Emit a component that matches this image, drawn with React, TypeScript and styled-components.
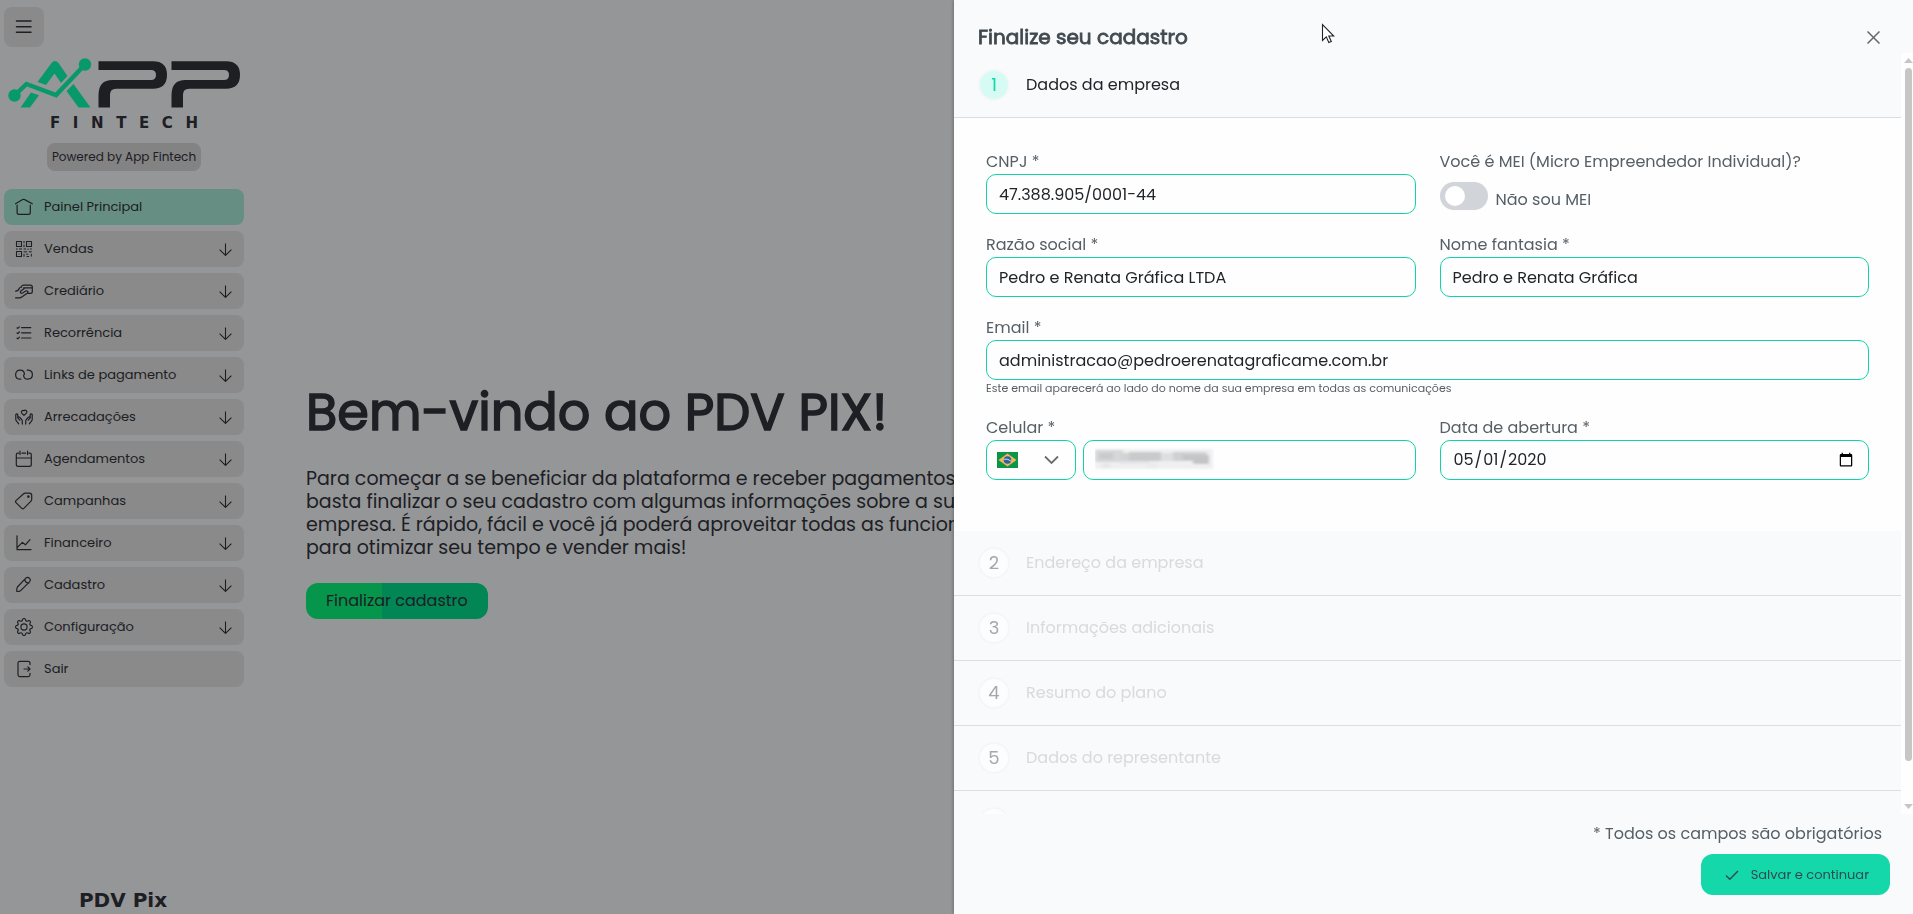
import React, { useState } from 'react';
import styled, { createGlobalStyle, css } from 'styled-components';
import { BsGear } from 'react-icons/bs';

const font = "Poppins, Inter, 'Noto Sans', sans-serif";
const accent = '#14d8aa';
const surface = '#f8fafc';

const GlobalStyle = createGlobalStyle`
  *, *::before, *::after { box-sizing: border-box; }
  body { margin: 0; background: ${surface}; color: #33343c; font-family: ${font}; font-size: 16px; line-height: 24px; overflow: hidden; }
  button, input, select { font: inherit; color: inherit; }
  h1, h2, p, ul { margin: 0; padding: 0; }
`;

/* ---------- page ---------- */

const Page = styled.div`
  display: flex;
  height: 100vh;
`;

const Sidebar = styled.aside`
  display: flex;
  flex-direction: column;
  flex: 0 0 248px;
  padding: 7px 4px 2px;
`;

const MenuButton = styled.button`
  display: grid;
  place-items: center;
  width: 40px;
  height: 40px;
  padding: 0;
  border: 0;
  border-radius: 8px;
  background: #e4e6e5;
`;

const LogoBox = styled.div`
  display: flex;
  flex-direction: column;
  align-items: center;
  margin-top: 11px;
`;

const LogoMark = styled.svg`
  display: block;
  width: 232px;
  height: 50px;
`;

const Wordmark = styled.div`
  display: flex;
  justify-content: space-between;
  width: 148px;
  margin-top: 7px;
  font-family: 'DejaVu Sans', sans-serif;
  font-size: 15px;
  font-weight: 700;
  line-height: 16px;
`;

const Powered = styled.div`
  align-self: center;
  margin-top: 12px;
  padding: 0 5px;
  border-radius: 8px;
  background: #dadada;
  font-size: 12px;
  line-height: 28px;
`;

const Menu = styled.ul`
  display: flex;
  flex-direction: column;
  gap: 6px;
  list-style: none;
`;

const Nav = styled.nav`
  margin-top: 18px;
`;

const MenuItem = styled.button<{ $active?: boolean }>`
  display: flex;
  align-items: center;
  gap: 11px;
  width: 100%;
  height: 36px;
  padding: 0 12px 0 11px;
  border: 0;
  border-radius: 8px;
  background: ${(p) => (p.$active ? '#aceddb' : '#e4e6e5')};
  font-size: 13px;
  text-align: left;

  span { flex: 1; }
`;

const Product = styled.footer`
  margin-top: auto;
  padding-right: 2px;
  font-family: 'DejaVu Sans', sans-serif;
  font-size: 20px;
  font-weight: 700;
  line-height: 24px;
  text-align: center;
`;

const Welcome = styled.main`
  display: flex;
  flex: 1;
  flex-direction: column;
  justify-content: center;
  align-items: flex-start;
  padding: 86px 0 0 58px;

  h1 {
    font-size: 51px;
    font-weight: 400;
    line-height: 62px;
    -webkit-text-stroke: 0.03em currentColor;
  }

  p {
    margin-top: 24px;
    font-size: 19px;
    line-height: 23px;
    white-space: nowrap;
  }
`;

const FinishButton = styled.button`
  height: 36px;
  margin-top: 24px;
  padding: 0 20px;
  border: 0;
  border-radius: 12px;
  background: linear-gradient(90deg, #09f97e 42%, #04df90 42%);
`;

/* ---------- drawer ---------- */

const Backdrop = styled.div`
  position: fixed;
  inset: 0;
  display: flex;
  justify-content: flex-end;
  background: rgba(0, 0, 0, 0.4);
`;

const Drawer = styled.section`
  display: flex;
  flex-direction: column;
  width: 50.13%;
  background: ${surface};
  box-shadow: 0 0 4px rgba(0, 0, 0, 0.4);
`;

const DrawerHeader = styled.header`
  display: flex;
  justify-content: space-between;
  align-items: flex-end;
  height: 53px;
  padding: 0 28px 4px 24px;

  h2 {
    color: #41494f;
    font-size: 20px;
    font-weight: 400;
    line-height: 24px;
    -webkit-text-stroke: 0.04em currentColor;
  }
`;

const CloseButton = styled.button`
  display: grid;
  place-items: center;
  width: 24px;
  height: 24px;
  padding: 0;
  border: 0;
  background: none;
  color: #666;
`;

const DrawerBody = styled.div`
  display: flex;
  flex: 1;
  min-height: 0;
`;

const Steps = styled.div`
  flex: 1;
  min-width: 0;
  overflow: hidden;
`;

const StepRow = styled.div<{ $active?: boolean }>`
  display: flex;
  align-items: center;
  gap: 16px;
  height: 65px;
  padding: 0 24px;
  border-bottom: 1px solid #dcdee1;
  color: ${(p) => (p.$active ? '#212529' : '#d8dadc')};
`;

const StepBadge = styled.span<{ $active?: boolean }>`
  display: grid;
  place-items: center;
  width: 32px;
  height: 32px;
  border: 2px solid #f4f6f8;
  border-radius: 50%;
  background: ${(p) => (p.$active ? '#d6fbf4' : '#fcfdfe')};
  color: ${(p) => (p.$active ? accent : '#a6a8aa')};
  font-size: 18px;
`;

const Form = styled.form`
  display: grid;
  grid-template-columns: 1fr 1fr;
  gap: 19px 24px;
  padding: 32px 32px 51px;
  background: #fefefe;
`;

const Field = styled.div<{ $wide?: boolean }>`
  display: flex;
  flex-direction: column;
  min-width: 0;
  color: #555f65;
  ${(p) => p.$wide && css`grid-column: 1 / -1;`}
`;

const Label = styled.label`
  font-size: 16px;
`;

const controlFrame = css`
  width: 100%;
  height: 40px;
  border: 1px solid #10d3a8;
  border-radius: 10px;
  background: transparent;
  outline: 0;
`;

const TextInput = styled.input`
  ${controlFrame}
  padding: 0 12px;
  color: #212529;
`;

const Hint = styled.small`
  font-size: 11px;
  line-height: 17px;
`;

const PhoneRow = styled.div`
  display: grid;
  grid-template-columns: 90px 1fr;
  gap: 7px;
`;

const Stack = styled.div`
  display: grid;
  align-items: center;

  > * { grid-area: 1 / 1; }
  > svg { pointer-events: none; }
`;

const CountrySelect = styled.select`
  ${controlFrame}
  appearance: none;
`;

const FlagRow = styled.div`
  display: flex;
  justify-content: space-between;
  align-items: center;
  padding: 0 16px 0 11px;
  pointer-events: none;
`;

const MaskedNumber = styled.svg`
  width: 120px;
  height: 24px;
  margin-left: 12px;
`;

const SwitchRow = styled.label`
  display: flex;
  gap: 8px;
  height: 40px;
  padding-top: 8px;
  line-height: 36px;
`;

const Switch = styled.input`
  appearance: none;
  width: 48px;
  height: 28px;
  margin: 0;
  padding: 4px 5px;
  border-radius: 14px;
  background: #d1d4d9;

  &::before {
    content: '';
    display: block;
    width: 20px;
    height: 20px;
    border-radius: 50%;
    background: #fff;
  }

  &:checked { background: ${accent}; }
  &:checked::before { margin-left: 18px; }
`;

const ScrollTrack = styled.div`
  display: flex;
  flex-direction: column;
  align-items: center;
  width: 12px;
  padding: 5px 0 5px 2px;
  background: #fefefe;
`;

const ScrollThumb = styled.div`
  flex: 1;
  width: 7px;
  margin: 5px 0 43px;
  border-radius: 4px;
  background: #c6c6c6;
`;

const DrawerFooter = styled.footer`
  display: flex;
  flex-direction: column;
  align-items: flex-end;
  gap: 8px;
  height: 100px;
  padding: 8px 23px 0;

  p { padding-right: 8px; color: #555f65; }
`;

const SaveButton = styled.button`
  display: flex;
  align-items: center;
  gap: 12px;
  height: 41px;
  padding: 0 21px 0 24px;
  border: 0;
  border-radius: 12px;
  background: ${accent};
  color: #2f4a50;
  font-size: 13px;
`;

const Pointer = styled.svg`
  position: fixed;
  top: 23px;
  left: 1321px;
  pointer-events: none;
`;

/* ---------- icons ---------- */

const Glyph = ({ children }: { children: React.ReactNode }) => (
  <svg width="18" height="18" viewBox="0 0 18 18" fill="none" stroke="currentColor" strokeWidth="1.2" strokeLinecap="round" strokeLinejoin="round" aria-hidden="true">
    {children}
  </svg>
);

const icons = {
  home: <Glyph><path d="M.5 5.800 7.700 1.600q1-.6 2 0l7.600 4.200M2.100 7.200v7.300q0 1.900 1.900 1.900h9.400q1.900 0 1.900-1.900V7.200" /></Glyph>,
  qr: (
    <Glyph>
      <path d="M1.500 1.500h5v5h-5zM11.500 1.500h5v5h-5zM1.500 11.500h5v5h-5z" strokeWidth="1.100" />
      <path d="M4 4h.1M14 4h.1M4 14h.1M9 1.400v1.200M9 5v1.800M1.400 9h.8M4.400 9h2.200M9 9h1.600M13 9v.6M15.400 9h1M9 11.800h2.600M14.200 11.800h2.200M9 14.200v2.200M11.600 14.200h1.200M12 16.500h1.600M16.300 14.200v2" strokeWidth="1" />
    </Glyph>
  ),
  card: (
    <Glyph>
      <path d="M6.400 5.200q.2-2 2-2h7q1.900 0 1.900 1.900v4.400q0 1.900-1.900 1.900h-2.600M8.600 5.800h8.600" />
      <path d="M.6 9.200q3-.4 3.800-3Q4.800 5 6 5M.6 15.800h3.700q1.400 0 2.500-.8l5.400-3.800q1.200-1 .4-2-.7-.8-1.900-.1L7.600 11q-1.600.8-2.200-.4-.4-1 .8-1.800l3-2.200" />
    </Glyph>
  ),
  list: <Glyph><path d="M6.600 3.600h9.200M6.600 8.800h9.200M6.600 14h9.200M2 3.800l.8.6L4.400 2.800M2 9l.8.6L4.400 8M2 14.200l.8.6 1.600-1.600" /></Glyph>,
  link: <Glyph><path d="M5.800 13.200Q.6 13.400.6 8.800q0-4.600 4.600-4.600 4.200 0 4.200 4.200M12.200 4.200q5.200-.2 5.200 4.400 0 4.600-4.600 4.600-4.200 0-4.200-4.200" /></Glyph>,
  hands: (
    <Glyph>
      <path d="M9 7.400 6.700 5.100a1.700 1.700 0 0 1 2.300-2.400 1.700 1.700 0 0 1 2.400 2.400z" />
      <path d="M.8 6.400v5.100q0 .8.6 1.400l2.300 2.900M.8 6.400q1.200-1.200 2 .2v3.200l2 2.400M2.800 9.200q1-.9 2 .2l1.600 1.800q.9 1 .9 2.200v2.700M17.200 6.400v5.100q0 .8-.6 1.400l-2.300 2.900M17.200 6.400q-1.200-1.200-2 .2v3.200l-2 2.400M15.200 9.200q-1-.9-2 .2l-1.600 1.800q-.9 1-.9 2.200v2.700" />
    </Glyph>
  ),
  calendar: <Glyph><path d="M3.600 3.200H2.900q-1.600 0-1.600 1.600v9.700q0 1.900 1.900 1.900h11.200q1.900 0 1.900-1.900V4.800q0-1.600-1.600-1.600H14M7 3.200h3.600M5 1.200v3.400M12.600 1.200v3.400M1.400 8h15" /></Glyph>,
  tag: <Glyph><path d="M10.300 1.200h4.200q2.200 0 2.200 2.200v4.200q0 .9-.7 1.600l-7.200 7.200q-1 1-2 0L1 10.600q-1-1 0-2l7.300-6.600q.8-.8 2-.8z" /><circle cx="13.400" cy="4.600" r=".7" /></Glyph>,
  chart: <Glyph><path d="M2 1.800v13.800h14M2.400 13.400l5-5 3 2.400 4.600-5.200" /></Glyph>,
  pencil: <Glyph><path d="m2.400 11 8.400-8.800q1.800-1.600 3.600 0 1.800 1.800.1 3.600l-8.600 8.600q-.8.8-1.800.9l-1.700.2q-.9 0-.7-1l.2-1.800q.1-1 .5-1.700zM9.800 3.600q.6 3.400 4 3.600" /></Glyph>,
  gear: <BsGear size={18} aria-hidden="true" />,
  exit: <Glyph><path d="M15 4.600V3.200q0-1.800-1.800-1.800H4.800Q3 1.400 3 3.200v11.600q0 1.800 1.800 1.800h8.400q1.800 0 1.800-1.800v-1.400M9 9h6M12.800 6.800 15 9l-2.200 2.200" /></Glyph>,
};

const ArrowDown = () => (
  <svg width="13" height="13" viewBox="0 0 13 13" fill="none" stroke="currentColor" strokeWidth="1.100" aria-hidden="true">
    <path d="M6.500 .5v11.800M.6 6.600l5.900 5.800 5.900-5.800" />
  </svg>
);

const BrazilFlag = () => (
  <svg width="21" height="16" viewBox="0 0 21 16" aria-hidden="true">
    <path fill="#0a9646" d="M0 0h21v16H0z" />
    <path fill="#f5b35a" d="M10.500 1.500 19.500 8l-9 6.500L1.500 8z" />
    <circle cx="10.500" cy="8" r="3.800" fill="#2f62a0" />
    <path d="M7 7.200q4-.8 7 2" fill="none" stroke="#dfe8f0" strokeWidth=".9" />
  </svg>
);

const smudges: [number, number, number, number, string][] = [
  [0, 1, 118, 20, '#f0f0f1'], [0, 2, 28, 12, '#d6d7d8'], [4, 5, 14, 6, '#c9cacb'], [26, 5, 40, 8, '#d2d3d5'],
  [34, 4, 32, 9, '#c9cacc'], [66, 5, 14, 8, '#dedfe1'], [78, 4, 34, 9, '#cfd0d2'], [88, 7, 26, 5, '#c3c5c7'],
  [98, 11, 16, 5, '#c4c4c6'], [7, 15, 8, 5, '#e6e7ea'], [52, 14, 10, 6, '#eaebee'], [24, 13, 30, 3, '#e4e5e8'],
];

/* ---------- app ---------- */

const menu: { icon: keyof typeof icons; text: string; leaf?: boolean }[] = [
  { icon: 'home', text: 'Painel Principal', leaf: true },
  { icon: 'qr', text: 'Vendas' },
  { icon: 'card', text: 'Crediário' },
  { icon: 'list', text: 'Recorrência' },
  { icon: 'link', text: 'Links de pagamento' },
  { icon: 'hands', text: 'Arrecadações' },
  { icon: 'calendar', text: 'Agendamentos' },
  { icon: 'tag', text: 'Campanhas' },
  { icon: 'chart', text: 'Financeiro' },
  { icon: 'pencil', text: 'Cadastro' },
  { icon: 'gear', text: 'Configuração' },
  { icon: 'exit', text: 'Sair', leaf: true },
];

const nextSteps = ['Endereço da empresa', 'Informações adicionais', 'Resumo do plano', 'Dados do representante'];

export default function App() {
  const [isMei, setIsMei] = useState(false);

  return (
    <>
      <GlobalStyle />
      <Page>
        <Sidebar>
          <MenuButton type="button" aria-label="Abrir menu">
            <svg width="18" height="16" viewBox="0 0 18 16" stroke="currentColor" strokeWidth="1.500" strokeLinecap="round" aria-hidden="true">
              <path d="M1.500 2h14.500M1.500 7.700h14.500M1.500 13.300h14.500" />
            </svg>
          </MenuButton>
          <LogoBox>
            <LogoMark viewBox="0 0 232 50" aria-hidden="true">
              <g fill="#0cffb4">
                <circle cx="6.500" cy="37.500" r="6.200" />
                <circle cx="77" cy="6.500" r="6.200" />
                <path d="M43.500 5q3.500-4 7 0l9 13-6.500 7L46.500 15.500 38 27l-8.500-3zM23 34.500l8 2.700L22 49.500h-9.500zM58.500 33l7-7 17 23.500h-12z" />
                <path d="M6.500 37.500 18.500 26 48 37 77 6.500" fill="none" stroke="#0cffb4" strokeWidth="4.500" />
              </g>
              <g fill="#33343a">
                <path id="loop" d="M90.500 3.300H145q14 0 14 13.700t-14 13.700h-37q-6 0-6 6v12.800H90.500V37q0-15 14-15H143q5 0 5-5t-5-5H90.500z" />
                <use href="#loop" x="73" />
              </g>
            </LogoMark>
            <Wordmark>
              {[...'FINTECH'].map((letter) => <span key={letter}>{letter}</span>)}
            </Wordmark>
          </LogoBox>
          <Powered>Powered by App Fintech</Powered>
          <Nav>
            <Menu>
              {menu.map((item, index) => (
                <li key={item.text}>
                  <MenuItem type="button" $active={index === 0}>
                    {icons[item.icon]}
                    <span>{item.text}</span>
                    {!item.leaf && <ArrowDown />}
                  </MenuItem>
                </li>
              ))}
            </Menu>
          </Nav>
          <Product>PDV Pix</Product>
        </Sidebar>
        <Welcome>
          <h1>Bem-vindo ao PDV PIX!</h1>
          <p>
            Para começar a se beneficiar da plataforma e receber pagamentos,<br />
            basta finalizar o seu cadastro com algumas informações sobre a sua<br />
            empresa. É rápido, fácil e você já poderá aproveitar todas as funcionalidades<br />
            para otimizar seu tempo e vender mais!
          </p>
          <FinishButton type="button">Finalizar cadastro</FinishButton>
        </Welcome>
      </Page>

      <Backdrop>
        <Drawer role="dialog" aria-labelledby="drawer-title">
          <DrawerHeader>
            <h2 id="drawer-title">Finalize seu cadastro</h2>
            <CloseButton type="button" aria-label="Fechar">
              <svg width="13" height="13" viewBox="0 0 13 13" stroke="currentColor" strokeWidth="1.500" aria-hidden="true">
                <path d="m.5.5 12 12M12.500.5l-12 12" />
              </svg>
            </CloseButton>
          </DrawerHeader>
          <DrawerBody>
            <Steps>
              <StepRow $active><StepBadge $active>1</StepBadge>Dados da empresa</StepRow>
              <Form>
                <Field>
                  <Label htmlFor="cnpj">CNPJ *</Label>
                  <TextInput id="cnpj" defaultValue="47.388.905/0001-44" />
                </Field>
                <Field>
                  <span>Você é MEI (Micro Empreendedor Individual)?</span>
                  <SwitchRow>
                    <Switch type="checkbox" checked={isMei} onChange={(e) => setIsMei(e.target.checked)} />
                    {isMei ? 'Sou MEI' : 'Não sou MEI'}
                  </SwitchRow>
                </Field>
                <Field>
                  <Label htmlFor="razao">Razão social *</Label>
                  <TextInput id="razao" defaultValue="Pedro e Renata Gráfica LTDA" />
                </Field>
                <Field>
                  <Label htmlFor="fantasia">Nome fantasia *</Label>
                  <TextInput id="fantasia" defaultValue="Pedro e Renata Gráfica" />
                </Field>
                <Field $wide>
                  <Label htmlFor="email">Email *</Label>
                  <TextInput id="email" type="email" defaultValue="administracao@pedroerenatagraficame.com.br" />
                  <Hint>Este email aparecerá ao lado do nome da sua empresa em todas as comunicações</Hint>
                </Field>
                <Field>
                  <Label htmlFor="celular">Celular *</Label>
                  <PhoneRow>
                    <Stack>
                      <CountrySelect aria-label="Código do país"><option value="BR" aria-label="Brasil" /></CountrySelect>
                      <FlagRow>
                        <BrazilFlag />
                        <svg width="17" height="12" viewBox="0 0 17 12" fill="none" stroke="#6d6d70" strokeWidth="1.800" aria-hidden="true"><path d="m2 2.500 6.500 6.500L15 2.500" /></svg>
                      </FlagRow>
                    </Stack>
                    <Stack>
                      <TextInput id="celular" type="tel" />
                      <MaskedNumber viewBox="0 0 120 24" aria-hidden="true">
                        <defs><filter id="smear"><feGaussianBlur stdDeviation="1.500 1" /></filter></defs>
                        <g filter="url(#smear)">
                          {smudges.map(([x, y, w, h, fill]) => <rect key={`${x}-${y}`} x={x} y={y} width={w} height={h} fill={fill} />)}
                        </g>
                      </MaskedNumber>
                    </Stack>
                  </PhoneRow>
                </Field>
                <Field>
                  <Label htmlFor="abertura">Data de abertura *</Label>
                  <TextInput id="abertura" type="date" defaultValue="2020-05-01" />
                </Field>
              </Form>
              {nextSteps.map((step, index) => (
                <StepRow key={step}><StepBadge>{index + 2}</StepBadge>{step}</StepRow>
              ))}
              <StepRow><StepBadge /></StepRow>
            </Steps>
            <ScrollTrack aria-hidden="true">
              <svg width="9" height="5" viewBox="0 0 9 5"><path fill="#c6c6c6" d="M0 5 4.500 0 9 5z" /></svg>
              <ScrollThumb />
              <svg width="9" height="5" viewBox="0 0 9 5"><path fill="#c6c6c6" d="M0 0l4.500 5L9 0z" /></svg>
            </ScrollTrack>
          </DrawerBody>
          <DrawerFooter>
            <p>* Todos os campos são obrigatórios</p>
            <SaveButton type="button">
              <svg width="14" height="12" viewBox="0 0 14 12" fill="none" stroke="currentColor" strokeWidth="1.500" aria-hidden="true"><path d="m1 6.500 3.800 3.700L13 2" /></svg>
              Salvar e continuar
            </SaveButton>
          </DrawerFooter>
        </Drawer>
      </Backdrop>

      <Pointer width="14" height="21" viewBox="0 0 14 21" aria-hidden="true">
        <path d="M1.500 1.500v16l3.800-3.600 2.500 5.600 2.500-1.100-2.500-5.400h5z" fill="#fff" stroke="#222" strokeWidth="1.100" />
      </Pointer>
    </>
  );
}
